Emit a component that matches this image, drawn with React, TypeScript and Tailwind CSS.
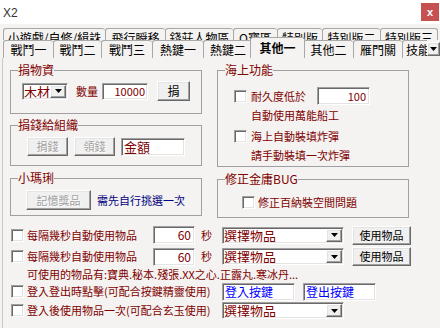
import React from 'react';

const sunken =
  'border border-t-[#a0a0a0] border-l-[#a0a0a0] border-r-white border-b-white shadow-[inset_1px_1px_0_#696969,inset_-1px_-1px_0_#e3e3e3]';
const raised =
  'border border-t-white border-l-white border-r-[#696969] border-b-[#696969] shadow-[inset_-1px_-1px_0_#a0a0a0,inset_1px_1px_0_#e3e3e3] bg-[#f0f0f0]';

const row1: [string, string][] = [
  ['小遊戲/自修/緝誅', 'w-[102px]'],
  ['飛行瞬移', 'w-[60px]'],
  ['錢莊人物區', 'w-[68px]'],
  ['O寶區', 'w-[44px]'],
  ['特別版', 'w-[45px]'],
  ['特別版二', 'w-[58px]'],
  ['特別版三', 'w-[58px] border-r'],
];

const row2a: [string, string][] = [
  ['戰鬥一', 'w-[50px]'],
  ['戰鬥二', 'w-[48px]'],
  ['戰鬥三', 'w-[51px]'],
  ['熱鍵一', 'w-[51px]'],
  ['熱鍵二', 'w-[49px]'],
];
const row2b: [string, string][] = [
  ['其他二', 'w-[50px]'],
  ['雁門關', 'w-[49px]'],
  ['技能', 'w-[36px] justify-start pl-[3px]'],
];

function DownArrow() {
  return (
    <svg width="7" height="4" viewBox="0 0 7 4">
      <path d="M0 0h7L3.5 4z" fill="#000" />
    </svg>
  );
}

function CheckBox() {
  return <span className={`block w-[13px] h-[13px] shrink-0 bg-white ${sunken}`} />;
}

function Combo({ text, className = '' }: { text: string; className?: string }) {
  return (
    <div className={`flex h-[17px] p-px bg-white shrink-0 ${sunken} ${className}`}>
      <span className="flex-1 leading-[13px] text-[13px] text-[#800000] whitespace-nowrap overflow-hidden">{text}</span>
      <span className={`w-[16px] flex items-center justify-center ${raised}`}>
        <DownArrow />
      </span>
    </div>
  );
}

function Edit({ text, className = '' }: { text: string; className?: string }) {
  return (
    <div className={`flex items-center bg-white shrink-0 px-[3px] whitespace-nowrap ${sunken} ${className}`}>
      {text}
    </div>
  );
}

function Btn({ text, className = '', disabled }: { text: string; className?: string; disabled?: boolean }) {
  return (
    <div
      className={`flex items-center justify-center shrink-0 text-[11px] ${raised} ${
        disabled ? 'text-[#a0a0a0] [text-shadow:1px_1px_0_#fff]' : 'text-black'
      } ${className}`}
    >
      {text}
    </div>
  );
}

function Group({ label, className = '', children }: { label: string; className?: string; children: React.ReactNode }) {
  return (
    <fieldset className={`border border-[#a0a0a0] shrink-0 ${className}`}>
      <legend className="ml-[7px] text-[12px] leading-[14px] text-[#800000]">{label}</legend>
      {children}
    </fieldset>
  );
}

export default function App() {
  return (
    <div className="w-[440px] h-[328px] overflow-hidden bg-[#f4f3f1] font-['Noto_Sans_CJK_TC','Noto_Sans_CJK_JP',sans-serif] text-[11px] leading-none text-[#800000]">
      {/* title bar */}
      <div className="h-[24px] bg-white flex items-start justify-between">
        <span className="ml-[3px] mt-[7px] text-[12px] text-[#333] font-['Liberation_Sans',sans-serif]">X2</span>
        <span className="mt-[3px] mr-px w-[18px] h-[18px] bg-[#c75050] text-white text-[11px] font-bold flex items-center justify-center font-['Liberation_Sans',sans-serif]">
          x
        </span>
      </div>

      {/* tabs */}
      <div className="pt-[4px] pl-[3px] text-black">
        <div className="flex h-[12px] overflow-hidden">
          {row1.map(([t, w]) => (
            <div
              key={t}
              className={`${w} h-[18px] shrink-0 border-t border-l border-[#a8a8a8] rounded-t-[3px] flex justify-center pt-[2px] text-[12px] leading-[14px] whitespace-nowrap`}
            >
              {t}
            </div>
          ))}
        </div>
        <div className="flex items-end h-[21px] -mt-[3px]">
          <div className="flex-1 min-w-0 h-full flex items-end overflow-hidden">
            {row2a.map(([t, w]) => (
              <div
                key={t}
                className={`${w} h-[18px] shrink-0 border-t border-l border-[#a8a8a8] rounded-t-[3px] bg-[#f4f3f1] flex items-center justify-center text-[12px] whitespace-nowrap`}
              >
                {t}
              </div>
            ))}
            <div className="w-[55px] h-[21px] -ml-[2px] -mr-[2px] shrink-0 relative z-10 border-t border-l border-r border-[#a8a8a8] rounded-t-[3px] bg-[#f4f3f1] flex items-center justify-center text-[12px] font-bold whitespace-nowrap">
              其他一
            </div>
            {row2b.map(([t, w]) => (
              <div
                key={t}
                className={`${w} h-[18px] shrink-0 border-t border-l border-[#a8a8a8] rounded-t-[3px] bg-[#f4f3f1] flex items-center justify-center text-[12px] whitespace-nowrap`}
              >
                {t}
              </div>
            ))}
          </div>
          <div className={`w-[13px] h-[14px] mb-[2px] shrink-0 flex items-center justify-center ${raised}`}>
            <DownArrow />
          </div>
        </div>
      </div>

      {/* page */}
      <div className="ml-[2px] h-[270px] border-l border-[#c8c8c8] flex flex-col">
        <div className="flex items-start gap-[15px] pl-[7px] pt-[5px] h-[160px]">
          {/* left column */}
          <div className="w-[192px] flex flex-col">
            <Group label="捐物資" className="h-[51px]">
              <div className="flex items-center h-[20px] mt-[4px] pl-[11px]">
                <Combo text="木材" className="w-[46px]" />
                <span className="ml-[8px] w-[22px] text-[11px]">數量</span>
                <Edit text="10000" className="ml-[4px] w-[46px] h-[17px] justify-end pr-[2px]" />
                <Btn text="捐" className="ml-[9px] w-[33px] h-[20px] text-[12px]" />
              </div>
            </Group>
            <Group label="捐錢給組織" className="mt-[4px] h-[48px]">
              <div className="flex items-center h-[19px] mt-[5px] pl-[16px]">
                <Btn text="捐錢" disabled className="w-[41px] h-[19px]" />
                <Btn text="領錢" disabled className="ml-[6px] w-[41px] h-[19px]" />
                <Edit text="金額" className="ml-[6px] w-[64px] h-[18px] text-[13px] pl-[2px]" />
              </div>
            </Group>
            <Group label="小瑪琍" className="mt-[5px] h-[45px]">
              <div className="flex items-center h-[20px] mt-[5px] pl-[15px]">
                <Btn text="記憶獎品" disabled className="w-[65px] h-[20px]" />
                <span className="ml-[6px] text-[#000080]">需先自行挑選一次</span>
              </div>
            </Group>
          </div>

          {/* right column */}
          <div className="w-[192px] flex flex-col">
            <Group label="海上功能" className="h-[104px]">
              <div className="flex flex-col pl-[16px]">
                <div className="flex items-center h-[18px] mt-[10px]">
                  <CheckBox />
                  <span className="ml-[4px] w-[66px]">耐久度低於</span>
                  <Edit text="100" className="w-[53px] h-[18px] justify-end pr-[3px]" />
                </div>
                <div className="mt-[3px] h-[14px] leading-[14px] pl-[17px]">自動使用萬能船工</div>
                <div className="flex items-center h-[14px] mt-[7px]">
                  <CheckBox />
                  <span className="ml-[4px]">海上自動裝填炸彈</span>
                </div>
                <div className="mt-[5px] h-[14px] leading-[14px] pl-[17px]">請手動裝填一次炸彈</div>
              </div>
            </Group>
            <Group label="修正金庸BUG" className="mt-[5px] h-[46px]">
              <div className="flex items-center h-[14px] mt-[9px] pl-[24px]">
                <CheckBox />
                <span className="ml-[3px]">修正百納裝空間問題</span>
              </div>
            </Group>
          </div>
        </div>

        {/* bottom rows */}
        <div className="flex flex-col pl-[8px]">
          <div className="flex items-center h-[20px] mt-[7px]">
            <CheckBox />
            <span className="ml-[3px] w-[126px]">每隔幾秒自動使用物品</span>
            <Edit text="60" className="w-[42px] h-[18px] justify-end pr-[3px] text-[12px]" />
            <span className="ml-[6px] w-[11px]">秒</span>
            <Combo text="選擇物品" className="ml-[10px] w-[122px]" />
            <Btn text="使用物品" className="ml-[8px] w-[59px] h-[19px]" />
          </div>
          <div className="flex items-center h-[21px] mt-px">
            <CheckBox />
            <span className="ml-[3px] w-[126px]">每隔幾秒自動使用物品</span>
            <Edit text="60" className="w-[42px] h-[18px] justify-end pr-[3px] text-[12px]" />
            <span className="ml-[6px] w-[11px]">秒</span>
            <Combo text="選擇物品" className="ml-[10px] w-[122px]" />
            <Btn text="使用物品" className="ml-[8px] w-[59px] h-[19px]" />
          </div>
          <div className="flex items-center h-[15px] pl-[16px] whitespace-nowrap">
            可使用的物品有:寶典.秘本.殘張.XX之心.正露丸.寒冰丹...
          </div>
          <div className="flex items-center h-[19px]">
            <CheckBox />
            <span className="ml-[3px] w-[195px] whitespace-nowrap">登入登出時點擊(可配合按鍵精靈使用)</span>
            <Edit text="登入按鍵" className="w-[73px] h-[18px] text-[#0000ff] text-[12px] pl-[2px]" />
            <Edit text="登出按鍵" className="ml-[8px] w-[73px] h-[18px] text-[#0000ff] text-[12px] pl-[2px]" />
          </div>
          <div className="flex items-center h-[19px]">
            <CheckBox />
            <span className="ml-[3px] w-[195px] whitespace-nowrap">登入後使用物品一次(可配合玄玉使用)</span>
            <Combo text="選擇物品" className="w-[122px]" />
          </div>
        </div>
      </div>
    </div>
  );
}
